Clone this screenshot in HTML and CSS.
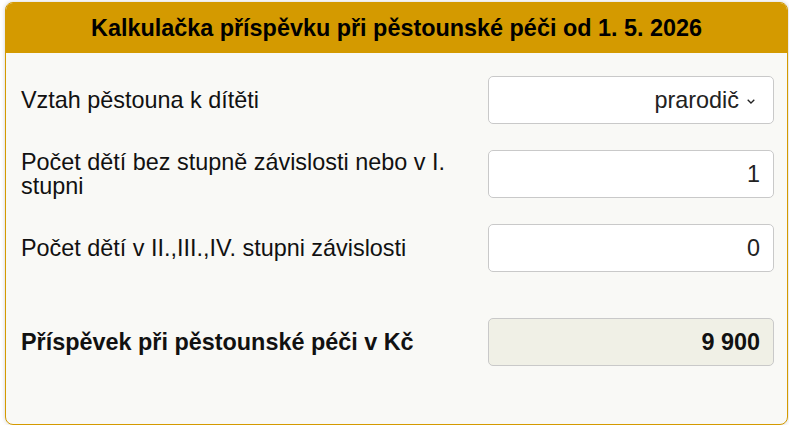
FILE: index.html
```html
<!DOCTYPE html>
<html lang="cs">
<head>
<meta charset="utf-8">
<title>Kalkulačka příspěvku</title>
<link rel="stylesheet" href="styles.css">
</head>
<body>
<div class="card">
  <div class="card-header">Kalkulačka příspěvku při pěstounské péči od 1. 5. 2026</div>
  <div class="card-body">
    <div class="row">
      <div class="label">Vztah pěstouna k dítěti</div>
      <div class="control select"><span>prarodič</span><svg class="chev" width="8" height="5" viewBox="0 0 8 5"><path d="M0.7 0.7 L4 4 L7.3 0.7" fill="none" stroke="#222" stroke-width="1.3"/></svg></div>
    </div>
    <div class="row">
      <div class="label">Počet dětí bez stupně závislosti nebo v I. stupni</div>
      <div class="control">1</div>
    </div>
    <div class="row">
      <div class="label">Počet dětí v II.,III.,IV. stupni závislosti</div>
      <div class="control">0</div>
    </div>
    <div class="row result">
      <div class="label">Příspěvek při pěstounské péči v Kč</div>
      <div class="control output">9 900</div>
    </div>
  </div>
</div>
</body>
</html>
```
FILE: styles.css
```css
html, body {
  margin: 0;
  background: #ffffff;
}
body {
  padding: 2px 1px 0 5px;
  font-family: "Liberation Sans", Arial, sans-serif;
  color: #111;
}
.card {
  border: 1px solid #d49a00;
  border-radius: 8px;
  background: #f9f9f6;
  overflow: hidden;
  box-shadow: 0 0 4px rgba(0, 0, 0, 0.18);
  height: 423px;
  box-sizing: border-box;
}
.card-header {
  background: #d49a00;
  height: 50px;
  display: flex;
  align-items: center;
  justify-content: center;
  font-weight: bold;
  font-size: 23.4px;
  color: #000;
}
.card-body {
  padding: 23px 13px 0 15px;
  display: flex;
  flex-direction: column;
  gap: 26px;
}
.row {
  display: grid;
  grid-template-columns: 1fr 286px;
  column-gap: 18px;
  align-items: center;
}
.row.result {
  margin-top: 20px;
}
.label {
  font-size: 23.4px;
  line-height: 24px;
  color: #111;
  padding-right: 12px;
}
.result .label {
  font-weight: bold;
}
.control {
  height: 48px;
  box-sizing: border-box;
  border: 1px solid #c9c9c9;
  border-radius: 5px;
  background: #ffffff;
  display: flex;
  align-items: center;
  justify-content: flex-end;
  padding: 0 13px;
  font-size: 23.4px;
  color: #222;
}
.select {
  padding-right: 18px;
  gap: 8px;
}
.chev {
  display: block;
  margin-top: 2px;
}
.output {
  background: #f0f0e6;
  font-weight: bold;
  color: #111;
}
```
